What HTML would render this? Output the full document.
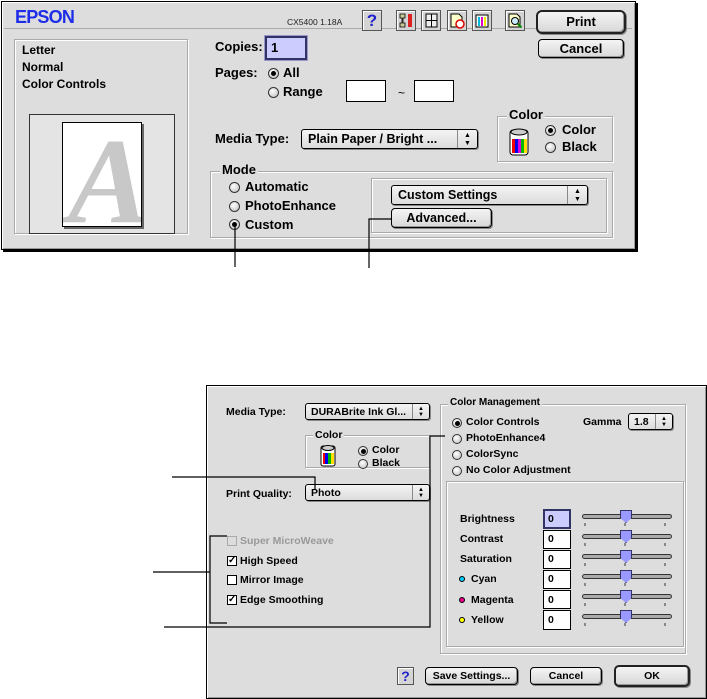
<!DOCTYPE html>
<html><head><meta charset="utf-8"><style>
*{box-sizing:border-box;margin:0;padding:0}
body{width:707px;height:699px;background:#fff;position:relative;overflow:hidden;font-family:"Liberation Sans",sans-serif;font-weight:bold;color:#000}
.a{position:absolute}
.dlg{position:absolute;background:#dddddd;border:1px solid #000;box-shadow:inset 1px 1px 0 #fff,inset -1px -1px 0 #999,2px 2px 0 #000}
.grp{position:absolute;border:1px solid #aaa;box-shadow:1px 1px 0 #fff,inset 1px 1px 0 #fff}
.t{position:absolute;font-size:12px;white-space:nowrap;line-height:14px}
.s{position:absolute;font-size:10.5px;white-space:nowrap;line-height:12px}
.btn{position:absolute;border:1px solid #000;border-radius:4px;background:linear-gradient(#f4f4f4,#d8d8d8);box-shadow:inset -1px -1px 0 #999,1px 1px 0 #888;text-align:center;font-size:12px}
.pop{position:absolute;border:1px solid #000;border-radius:3px;background:linear-gradient(#f4f4f4,#dcdcdc);box-shadow:1px 1px 0 #888}
.pop .ar{position:absolute;right:0;top:0;bottom:0;width:20px;border-left:1px solid #888;text-align:center;font-size:7px;line-height:8px;padding-top:2px}
.in{position:absolute;background:#fff;border:1px solid #000;box-shadow:inset 1px 1px 0 #888}
.r{position:absolute;width:11px;height:11px;border-radius:50%;border:1px solid #333;background:radial-gradient(circle at 40% 35%,#fff,#bbb)}
.r.on::after{content:"";position:absolute;left:2px;top:2px;width:5px;height:5px;border-radius:50%;background:#000}
.cb{position:absolute;width:10px;height:10px;border:1px solid #000;background:#fff;font-size:10px;line-height:8px;text-align:center}
.ico{position:absolute;width:20px;height:21px;border:1px solid #555;background:#d4d4d4;box-shadow:inset 1px 1px 0 #fff}
.sl{position:absolute;left:582px;width:90px;height:5px;border:1px solid #333;border-radius:3px;background:#aaa}
.th{position:absolute;left:620px;width:12px;height:13px;background:#99f;border:1px solid #336;clip-path:polygon(0 0,100% 0,100% 60%,50% 100%,0 60%)}
</style></head><body>

<div class="dlg" style="left:1px;top:1px;width:635px;height:249px"></div>
<div class="a" style="left:15px;top:7px;font-size:18px;color:#1e2ee8;letter-spacing:-0.8px">EPSON</div>
<div class="a" style="left:4px;top:28px;width:628px;height:1px;background:#aaa"></div>
<div class="a" style="left:287px;top:17px;font-size:8.5px;font-weight:normal;color:#222">CX5400 1.18A</div>
<div class="ico" style="left:362px;top:10px;color:#22c;font-size:17px;text-align:center;line-height:19px">?</div>
<div class="ico" style="left:396px;top:10px"><svg width="18" height="19"><path d="M3 3h5v4H6v5h2v4H3v-4h2V7H3z" fill="#cc9" stroke="#000" stroke-width=".8"/><rect x="11" y="3" width="4" height="13" fill="#d22"/></svg></div>
<div class="ico" style="left:421px;top:10px"><svg width="18" height="19"><rect x="4" y="3" width="11" height="13" fill="#eee" stroke="#000"/><path d="M9.5 3v13M4 9.5h11" stroke="#000"/></svg></div>
<div class="ico" style="left:447px;top:10px"><svg width="18" height="19"><path d="M3 3h8l3 3v10H3z" fill="#ffc" stroke="#000"/><circle cx="12" cy="13" r="4" fill="#fff" stroke="#d00" stroke-width="1.5"/></svg></div>
<div class="ico" style="left:472px;top:10px"><svg width="18" height="19"><rect x="3" y="4" width="12" height="12" fill="#fff" stroke="#000"/><rect x="5" y="6" width="2" height="9" fill="#0bd"/><rect x="8" y="6" width="2" height="9" fill="#d0c"/><rect x="11" y="6" width="2" height="9" fill="#ee0"/></svg></div>
<div class="ico" style="left:505px;top:10px"><svg width="18" height="19"><path d="M3 3h8l3 3v10H3z" fill="#ffc" stroke="#000"/><circle cx="9" cy="10" r="3.5" fill="#cef" stroke="#000"/><path d="M11.5 12.5l4 4" stroke="#080" stroke-width="2"/></svg></div>
<div class="btn" style="left:536px;top:10px;width:90px;height:24px;border:2px solid #222;border-radius:6px;line-height:19px;font-size:13px">Print</div>
<div class="btn" style="left:538px;top:39px;width:86px;height:19px;line-height:17px;font-size:13px">Cancel</div>

<div class="grp" style="left:14px;top:39px;width:174px;height:195px"></div>
<div class="t" style="left:22px;top:43px">Letter</div>
<div class="t" style="left:22px;top:60px">Normal</div>
<div class="t" style="left:22px;top:77px">Color Controls</div>
<div class="a" style="left:29px;top:114px;width:146px;height:120px;border:1px solid #333;background:#e4e4e4"></div>
<div class="a" style="left:62px;top:122px;width:80px;height:105px;background:#fff;border:1px solid #000;box-shadow:2px 2px 0 #666;overflow:hidden"><div style="position:absolute;left:5px;top:4px;font:italic bold 122px 'Liberation Serif',serif;color:#c8c8c8;line-height:110px">A</div></div>

<div class="t" style="left:215px;top:40px;font-size:13px">Copies:</div>
<div class="in" style="left:265px;top:36px;width:42px;height:24px;background:#ccf;border:2px solid #336;box-shadow:0 0 0 1px #99c"></div>
<div class="t" style="left:271px;top:41px;font-size:13px">1</div>
<div class="t" style="left:215px;top:66px;font-size:13px">Pages:</div>
<div class="r on" style="left:268px;top:68px"></div><div class="t" style="left:283px;top:66px;font-size:13px">All</div>
<div class="r" style="left:268px;top:87px"></div><div class="t" style="left:283px;top:85px;font-size:13px">Range</div>
<div class="in" style="left:346px;top:80px;width:40px;height:22px;box-shadow:none"></div>
<div class="t" style="left:398px;top:86px;font-weight:normal">~</div>
<div class="in" style="left:414px;top:80px;width:40px;height:22px;box-shadow:none"></div>
<div class="t" style="left:215px;top:132px;font-size:13px">Media Type:</div>
<div class="pop" style="left:301px;top:129px;width:177px;height:20px"><div class="t" style="left:6px;top:2px;font-size:12.5px">Plain Paper / Bright ...</div><div class="ar">&#9650;<br>&#9660;</div></div>

<div class="grp" style="left:497px;top:116px;width:116px;height:46px"></div>
<div class="t" style="left:507px;top:108px;background:#ddd;padding:0 2px;font-size:13px">Color</div>
<svg class="a" style="left:508px;top:127px" width="24" height="30"><rect x="2" y="3" width="18" height="25" rx="3" fill="#fff" stroke="#000"/><rect x="4" y="12" width="3" height="14" fill="#e00"/><rect x="7" y="12" width="3" height="14" fill="#00e"/><rect x="10" y="12" width="3" height="14" fill="#d0d"/><rect x="13" y="12" width="3" height="14" fill="#0b0"/><rect x="16" y="12" width="3" height="14" fill="#fd0"/><ellipse cx="11" cy="5" rx="8" ry="3" fill="#ccc" stroke="#000"/></svg>
<div class="r on" style="left:545px;top:125px"></div><div class="t" style="left:562px;top:123px;font-size:13px">Color</div>
<div class="r" style="left:545px;top:142px"></div><div class="t" style="left:562px;top:140px;font-size:13px">Black</div>

<div class="grp" style="left:210px;top:171px;width:403px;height:67px"></div>
<div class="t" style="left:220px;top:163px;background:#ddd;padding:0 2px;font-size:13px">Mode</div>
<div class="r" style="left:229px;top:182px"></div><div class="t" style="left:245px;top:180px;font-size:13px">Automatic</div>
<div class="r" style="left:229px;top:201px"></div><div class="t" style="left:245px;top:199px;font-size:13px">PhotoEnhance</div>
<div class="r on" style="left:229px;top:219px"></div><div class="t" style="left:245px;top:218px;font-size:13px">Custom</div>
<div class="grp" style="left:371px;top:178px;width:236px;height:55px"></div>
<div class="pop" style="left:391px;top:185px;width:197px;height:20px"><div class="t" style="left:6px;top:2px;font-size:12.5px">Custom Settings</div><div class="ar">&#9650;<br>&#9660;</div></div>
<div class="btn" style="left:391px;top:208px;width:101px;height:20px;line-height:18px;font-size:12.5px">Advanced...</div>

<div class="dlg" style="left:206px;top:385px;width:501px;height:314px;box-shadow:inset 1px 1px 0 #fff,inset -1px -1px 0 #999"></div>
<div class="s" style="left:226px;top:406px">Media Type:</div>
<div class="pop" style="left:305px;top:403px;width:125px;height:17px"><div class="s" style="left:5px;top:2px">DURABrite Ink Gl...</div><div class="ar" style="width:17px;font-size:6px;line-height:6px">&#9650;<br>&#9660;</div></div>
<div class="grp" style="left:305px;top:435px;width:125px;height:33px"></div>
<div class="s" style="left:313px;top:429px;background:#ddd;padding:0 2px">Color</div>
<svg class="a" style="left:319px;top:443px" width="20" height="25"><rect x="2" y="3" width="14" height="20" rx="2" fill="#fff" stroke="#000"/><rect x="4" y="10" width="2" height="11" fill="#e00"/><rect x="6" y="10" width="3" height="11" fill="#00e"/><rect x="9" y="10" width="3" height="11" fill="#0b0"/><rect x="12" y="10" width="3" height="11" fill="#fd0"/><ellipse cx="9" cy="5" rx="6" ry="2.5" fill="#ccc" stroke="#000"/></svg>
<div class="r on" style="left:358px;top:446px;width:10px;height:10px"></div><div class="s" style="left:372px;top:444px">Color</div>
<div class="r" style="left:358px;top:459px;width:10px;height:10px"></div><div class="s" style="left:372px;top:457px">Black</div>
<div class="s" style="left:226px;top:488px">Print Quality:</div>
<div class="pop" style="left:305px;top:484px;width:125px;height:17px"><div class="s" style="left:5px;top:2px">Photo</div><div class="ar" style="width:17px;font-size:6px;line-height:6px">&#9650;<br>&#9660;</div></div>
<div class="cb" style="left:227px;top:536px;border-color:#aaa;background:#ddd"></div><div class="s" style="left:240px;top:535px;color:#999">Super MicroWeave</div>
<div class="cb" style="left:227px;top:556px">&#10003;</div><div class="s" style="left:240px;top:555px">High Speed</div>
<div class="cb" style="left:227px;top:575px"></div><div class="s" style="left:240px;top:574px">Mirror Image</div>
<div class="cb" style="left:227px;top:595px">&#10003;</div><div class="s" style="left:240px;top:594px">Edge Smoothing</div>

<div class="grp" style="left:440px;top:404px;width:246px;height:250px"></div>
<div class="s" style="left:448px;top:397px;background:#ddd;padding:0 2px;font-size:10px">Color Management</div>
<div class="r on" style="left:452px;top:418px;width:10px;height:10px"></div><div class="s" style="left:466px;top:416px">Color Controls</div>
<div class="r" style="left:452px;top:434px;width:10px;height:10px"></div><div class="s" style="left:466px;top:432px">PhotoEnhance4</div>
<div class="r" style="left:452px;top:450px;width:10px;height:10px"></div><div class="s" style="left:466px;top:448px">ColorSync</div>
<div class="r" style="left:452px;top:466px;width:10px;height:10px"></div><div class="s" style="left:466px;top:464px">No Color Adjustment</div>
<div class="s" style="left:583px;top:416px">Gamma</div>
<div class="pop" style="left:628px;top:413px;width:45px;height:17px"><div class="s" style="left:5px;top:2px">1.8</div><div class="ar" style="width:17px;font-size:6px;line-height:6px">&#9650;<br>&#9660;</div></div>
<div class="grp" style="left:446px;top:481px;width:238px;height:166px"></div>

<div class="s" style="left:460px;top:513px">Brightness</div>
<div class="s" style="left:460px;top:533px">Contrast</div>
<div class="s" style="left:460px;top:553px">Saturation</div>
<div class="a" style="left:459px;top:576px;width:6px;height:6px;border-radius:50%;background:#0cf;border:1px solid #000"></div><div class="s" style="left:471px;top:573px">Cyan</div>
<div class="a" style="left:459px;top:597px;width:6px;height:6px;border-radius:50%;background:#e08;border:1px solid #000"></div><div class="s" style="left:471px;top:594px">Magenta</div>
<div class="a" style="left:459px;top:617px;width:6px;height:6px;border-radius:50%;background:#ff0;border:1px solid #000"></div><div class="s" style="left:471px;top:614px">Yellow</div>

<div class="in" style="left:543px;top:509px;width:28px;height:20px;background:#ccf;border:2px solid #336;box-shadow:none"></div>
<div class="in" style="left:543px;top:530px;width:28px;height:19px;box-shadow:none"></div>
<div class="in" style="left:543px;top:550px;width:28px;height:19px;box-shadow:none"></div>
<div class="in" style="left:543px;top:570px;width:28px;height:19px;box-shadow:none"></div>
<div class="in" style="left:543px;top:590px;width:28px;height:19px;box-shadow:none"></div>
<div class="in" style="left:543px;top:610px;width:28px;height:20px;box-shadow:none"></div>
<div class="s" style="left:548px;top:513px">0</div><div class="s" style="left:548px;top:533px">0</div><div class="s" style="left:548px;top:553px">0</div><div class="s" style="left:548px;top:573px">0</div><div class="s" style="left:548px;top:594px">0</div><div class="s" style="left:548px;top:614px">0</div>

<div class="sl" style="top:514px"></div><div class="th" style="top:510px"></div>
<div class="sl" style="top:534px"></div><div class="th" style="top:530px"></div>
<div class="sl" style="top:554px"></div><div class="th" style="top:550px"></div>
<div class="sl" style="top:574px"></div><div class="th" style="top:570px"></div>
<div class="sl" style="top:594px"></div><div class="th" style="top:590px"></div>
<div class="sl" style="top:614px"></div><div class="th" style="top:610px"></div>

<div class="ico" style="left:397px;top:667px;width:17px;height:18px;color:#22c;font-size:14px;text-align:center;line-height:16px">?</div>
<div class="btn" style="left:425px;top:667px;width:93px;height:18px;line-height:16px;font-size:10.5px">Save Settings...</div>
<div class="btn" style="left:530px;top:667px;width:72px;height:18px;line-height:16px;font-size:10.5px">Cancel</div>
<div class="btn" style="left:614px;top:665px;width:76px;height:22px;border:2px solid #222;border-radius:5px;line-height:18px;font-size:10.5px">OK</div>

<svg class="a" style="left:0;top:0" width="707" height="699">
<g stroke="#000" stroke-width="1.2" fill="none">
<path d="M235 225V267"/>
<path d="M391 219H369V268"/>
<path d="M172 477H315V490"/>
<path d="M227 536H210V623H227"/>
<path d="M153 572H210"/>
<path d="M164 627H430V436H445"/>
</g>
<g stroke="#333" stroke-width="1">
<path d="M585 523v3M625 523v3M665 523v3M585 543v3M625 543v3M665 543v3M585 563v3M625 563v3M665 563v3M585 583v3M625 583v3M665 583v3M585 603v3M625 603v3M665 603v3M585 623v3M625 623v3M665 623v3"/>
</g>
</svg>
</body></html>
